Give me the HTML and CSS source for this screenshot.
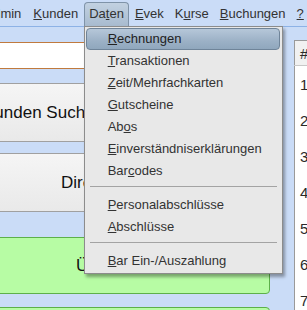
FILE: index.html
```html
<!DOCTYPE html>
<html lang="de">
<head>
    <meta charset="UTF-8">
    <meta name="viewport" content="width=device-width, initial-scale=1.0">
    <title>Kasse</title>
    <link rel="stylesheet" href="styles.css">
</head>
<body>
    <div class="menubar">
        <span class="menu">Admin</span>
        <span class="menu"><u>K</u>unden</span>
        <span class="menu menu-open">Da<u>t</u>en
            <div class="dropdown">
                <div class="item active"><u>R</u>echnungen</div>
                <div class="item"><u>T</u>ransaktionen</div>
                <div class="item"><u>Z</u>eit/Mehrfachkarten</div>
                <div class="item"><u>G</u>utscheine</div>
                <div class="item">Ab<u>o</u>s</div>
                <div class="item"><u>E</u>inverständniserklärungen</div>
                <div class="item">Bar<u>c</u>odes</div>
                <div class="separator"></div>
                <div class="item"><u>P</u>ersonalabschlüsse</div>
                <div class="item"><u>A</u>bschlüsse</div>
                <div class="separator"></div>
                <div class="item"><u>B</u>ar Ein-/Auszahlung</div>
            </div>
        </span>
        <span class="menu"><u>E</u>vek</span>
        <span class="menu">K<u>u</u>rse</span>
        <span class="menu"><u>B</u>uchungen</span>
        <span class="menu"><u>?</u></span>
    </div>

    <div class="main">
        <div class="left">
            <div class="search-field"></div>
            <div class="btn btn-search">Kunden Suchen</div>
            <div class="btn btn-direct">Direktverkauf</div>
            <div class="btn-green btn-first">Übersicht</div>
            <div class="btn-green"></div>
        </div>
        <table class="list">
            <thead>
                <tr><th>#</th></tr>
            </thead>
            <tbody>
                <tr><td>1</td></tr>
                <tr><td>2</td></tr>
                <tr><td>3</td></tr>
                <tr><td>4</td></tr>
                <tr><td>5</td></tr>
                <tr><td>6</td></tr>
                <tr><td>7</td></tr>
            </tbody>
        </table>
    </div>
</body>
</html>
```

FILE: styles.css
```css
body {
    margin: 0;
    height: 310px;
    overflow: hidden;
    background: #cadcf7;
    font-family: "Liberation Sans", Arial, sans-serif;
    color: #222;
}
.menubar {
    display: flex;
    height: 24px;
    padding-top: 2px;
    margin-left: -21px;
    border-bottom: 1px solid #8db2e6;
    font-size: 13px;
    position: relative;
    z-index: 5;
}
.menu {
    padding: 0 5.5px;
    line-height: 24px;
    color: #333;
    white-space: nowrap;
}
.menu:first-child {
    padding-right: 6.5px;
}
.menu-open {
    position: relative;
    box-sizing: border-box;
    border: 1px solid #7f93a8;
    border-bottom: none;
    border-radius: 4px 4px 0 0;
    padding: 0 4.5px;
    line-height: 22px;
    background: linear-gradient(#c2d1e1, #a8bbcf);
}
.dropdown {
    position: absolute;
    top: 23px;
    left: -1px;
    width: 199px;
    box-sizing: border-box;
    padding: 1px 2px 1px 1px;
    background: #e8e8e8;
    border: 1px solid #8c8c8c;
    box-shadow: 2px 3px 3px rgba(0, 0, 0, 0.35);
    font-size: 13px;
    line-height: 20px;
}
.item {
    height: 20px;
    padding-left: 21px;
    border: 1px solid transparent;
    color: #333;
}
.item.active {
    border-color: #6f8499;
    border-radius: 4px;
    background: linear-gradient(#b6c7d9, #9cb1c6 60%, #90a7bd);
    color: #222;
}
.separator {
    margin: 4px 3px 7px 4px;
    border-top: 1px solid #a3a3a3;
}
.main {
    display: flex;
    align-items: flex-start;
    gap: 24px;
}
.left {
    flex: none;
    width: 330px;
    margin-left: -60px;
    padding-top: 15px;
    font-size: 17px;
}
.search-field {
    height: 25px;
    background: #fff;
    border: 1px solid #c07a3e;
    margin-bottom: 14px;
}
.btn {
    display: flex;
    align-items: center;
    height: 57px;
    background: linear-gradient(#f5f5f5, #e9e9e9);
    border: 1px solid #a0a0a0;
    color: #111;
}
.btn-search {
    padding-left: 42px;
    margin-bottom: 11px;
}
.btn-direct {
    padding-left: 120px;
    margin-bottom: 25px;
}
.btn-green {
    display: flex;
    align-items: center;
    height: 55px;
    padding-left: 135px;
    background: #b7fca4;
    border: 1px solid #5db04a;
    border-radius: 4px;
    color: #111;
}
.btn-first {
    margin-bottom: 13px;
}
.list {
    flex: none;
    width: 120px;
    margin-top: 13px;
    border-collapse: collapse;
    background: #fff;
    border: 1px solid #9a9a9a;
    font-size: 15px;
    color: #2a2a2a;
}
th {
    height: 24px;
    padding: 0 0 0 5px;
    text-align: left;
    font-weight: normal;
    background: #f1f1f1;
    border-bottom: 1px solid #c8c8c8;
}
td {
    height: 36px;
    padding: 0 0 0 5px;
}
```
